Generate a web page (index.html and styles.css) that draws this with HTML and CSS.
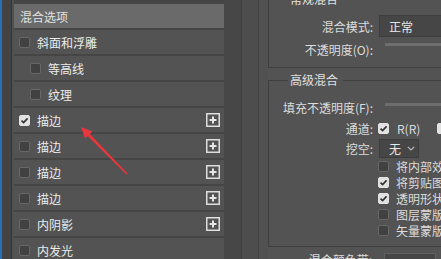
FILE: index.html
```html
<!DOCTYPE html>
<html lang="zh">
<head>
<meta charset="utf-8">
<link rel="stylesheet" href="styles.css">
</head>
<body>
<div class="app">
  <div class="edge"><div class="e-blue"></div><div class="e-gray"></div><div class="e-line"></div><div class="e-pad"></div></div>
  <div class="list">
    <div class="head">混合选项</div>
    <div class="row"><span class="cb"></span><span class="txt">斜面和浮雕</span></div>
    <div class="row sub"><span class="cb"></span><span class="txt">等高线</span></div>
    <div class="row sub"><span class="cb"></span><span class="txt">纹理</span></div>
    <div class="row"><span class="cb on"><svg viewBox="0 0 11 11" width="11" height="11"><path d="M2.5 5.6 L4.6 7.6 L8.6 3.4" fill="none" stroke="#333" stroke-width="1.7"/></svg></span><span class="txt">描边</span><svg class="plus" viewBox="0 0 14 14" width="14" height="14"><rect x="0.75" y="0.75" width="12.5" height="12.5" fill="none" stroke="#dedede" stroke-width="1.5"/><path d="M3.5 7 H10.5 M7 3.5 V10.5" stroke="#e6e6e6" stroke-width="2"/></svg></div>
    <div class="row"><span class="cb"></span><span class="txt">描边</span><svg class="plus" viewBox="0 0 14 14" width="14" height="14"><rect x="0.75" y="0.75" width="12.5" height="12.5" fill="none" stroke="#dedede" stroke-width="1.5"/><path d="M3.5 7 H10.5 M7 3.5 V10.5" stroke="#e6e6e6" stroke-width="2"/></svg></div>
    <div class="row"><span class="cb"></span><span class="txt">描边</span><svg class="plus" viewBox="0 0 14 14" width="14" height="14"><rect x="0.75" y="0.75" width="12.5" height="12.5" fill="none" stroke="#dedede" stroke-width="1.5"/><path d="M3.5 7 H10.5 M7 3.5 V10.5" stroke="#e6e6e6" stroke-width="2"/></svg></div>
    <div class="row"><span class="cb"></span><span class="txt">描边</span><svg class="plus" viewBox="0 0 14 14" width="14" height="14"><rect x="0.75" y="0.75" width="12.5" height="12.5" fill="none" stroke="#dedede" stroke-width="1.5"/><path d="M3.5 7 H10.5 M7 3.5 V10.5" stroke="#e6e6e6" stroke-width="2"/></svg></div>
    <div class="row"><span class="cb"></span><span class="txt">内阴影</span><svg class="plus" viewBox="0 0 14 14" width="14" height="14"><rect x="0.75" y="0.75" width="12.5" height="12.5" fill="none" stroke="#dedede" stroke-width="1.5"/><path d="M3.5 7 H10.5 M7 3.5 V10.5" stroke="#e6e6e6" stroke-width="2"/></svg></div>
    <div class="row"><span class="cb"></span><span class="txt">内发光</span></div>
  </div>
  <div class="gutter"><div class="gu-a"></div><div class="gu-line"></div><div class="gu-b"></div><div class="gu-line2"></div><div class="gu-c"></div></div>
  <div class="panel">
    <div class="group g1">
      <div class="gtitle"><span class="gt-text">常规混合</span></div>
      <div class="gbody b1">
        <div class="frow r-mode"><span class="flabel">混合模式:</span><div class="select wide">正常</div></div>
        <div class="frow r-op"><span class="flabel">不透明度(O):</span><div class="slider"></div></div>
      </div>
    </div>
    <div class="group g2">
      <div class="gtitle"><span class="gt-text">高级混合</span></div>
      <div class="gbody b2">
        <div class="frow r-fill"><span class="flabel">填充不透明度(F):</span><div class="slider s2"></div></div>
        <div class="frow r-ch"><span class="flabel">通道:</span><span class="cb on ch1"><svg viewBox="0 0 11 11" width="11" height="11"><path d="M2.5 5.6 L4.6 7.6 L8.6 3.4" fill="none" stroke="#333" stroke-width="1.7"/></svg></span><span class="rr">R(R)</span><span class="cb on ch2"></span></div>
        <div class="frow r-ko"><span class="flabel">挖空:</span><div class="select small">无<svg class="chev" viewBox="0 0 8 5" width="8" height="5"><path d="M0.8 0.8 L4 4 L7.2 0.8" fill="none" stroke="#bdbdbd" stroke-width="1.1"/></svg></div></div>
        <div class="ck"><span class="cb"></span><span>将内部效果混合成组</span></div>
        <div class="ck"><span class="cb on"><svg viewBox="0 0 11 11" width="11" height="11"><path d="M2.5 5.6 L4.6 7.6 L8.6 3.4" fill="none" stroke="#333" stroke-width="1.7"/></svg></span><span>将剪贴图层混合成组</span></div>
        <div class="ck"><span class="cb on"><svg viewBox="0 0 11 11" width="11" height="11"><path d="M2.5 5.6 L4.6 7.6 L8.6 3.4" fill="none" stroke="#333" stroke-width="1.7"/></svg></span><span>透明形状图层</span></div>
        <div class="ck"><span class="cb"></span><span>图层蒙版隐藏效果</span></div>
        <div class="ck"><span class="cb"></span><span>矢量蒙版隐藏效果</span></div>
      </div>
    </div>
    <div class="frow r-band"><span class="flabel top">混合颜色带:</span><div class="select band"></div></div>
  </div>
  <svg class="arrow" viewBox="0 0 441 259" width="441" height="259"><polygon points="81,127 92.4,131.4 89.8,134.1 127.6,173.5 126.4,174.5 87.7,136 85.2,138.6" fill="#e8363c"/></svg>
</div>
</body>
</html>
```
FILE: styles.css
```css
html, body {
  margin: 0;
  padding: 0;
  overflow: hidden;
}
body {
  width: 441px;
  height: 259px;
  background: #535353;
  font-family: "Noto Sans CJK SC", "Noto Sans", sans-serif;
  font-size: 12px;
  color: #e4e4e4;
}
.app {
  position: relative;
  display: flex;
  width: 441px;
  height: 259px;
  overflow: hidden;
}
.edge {
  display: flex;
  width: 14px;
  flex: none;
}
.e-blue { width: 2px; background: #2a6db8; }
.e-gray { width: 9px; background: #434343; }
.e-line { width: 1px; background: #363636; }
.e-pad { width: 2px; background: #505050; }

.list {
  width: 210px;
  flex: none;
  padding-top: 4px;
  background: #454545;
  display: flex;
  flex-direction: column;
}
.head {
  height: 24px;
  flex: none;
  border-bottom: 2px solid #454545;
  background: #6a6a6a;
  padding-left: 6px;
  display: flex;
  align-items: center;
  color: #e2e2e2;
}
.row {
  height: 24px;
  flex: none;
  border-bottom: 2px solid #454545;
  background: #535353;
  display: flex;
  align-items: center;
  padding-left: 5px;
  padding-right: 4px;
}
.row.sub { padding-left: 16px; }
.txt { color: #ececec; }
.cb {
  width: 11px;
  height: 11px;
  flex: none;
  box-sizing: border-box;
  border: 1px solid #686868;
  background: #414141;
  border-radius: 2px;
  margin-right: 7px;
  display: flex;
  align-items: center;
  justify-content: center;
}
.cb.on {
  background: #e2e2e2;
  border-color: #e2e2e2;
}
.cb svg { display: block; flex: none; margin: -1px; }
.plus { margin-left: auto; display: block; }

.gutter {
  display: flex;
  width: 44px;
  flex: none;
}
.gu-a { width: 17px; background: #474747; }
.gu-line { width: 1px; background: #3e3e3e; }
.gu-b { width: 16px; background: #4d4d4d; }
.gu-line2 { width: 1px; background: #414141; }
.gu-c { width: 9px; background: #515151; }

.panel {
  flex: 1;
  min-width: 0;
  display: flex;
  flex-direction: column;
  color: #dcdcdc;
}
.group { display: flex; flex-direction: column; }
.g1 { margin-top: -8px; }
.g2 { margin-top: 5px; }
.gtitle {
  display: flex;
  height: 14px;
  line-height: 14px;
  white-space: nowrap;
}
.gtitle::before {
  content: "";
  width: 19px;
  margin-top: 7px;
  border-top: 1px solid #3f3f3f;
  border-left: 1px solid #3f3f3f;
}
.gtitle::after {
  content: "";
  flex: 1;
  margin-top: 7px;
  margin-left: 5px;
  border-top: 1px solid #3f3f3f;
}
.gt-text { margin-left: 2px; color: #e0e0e0; }
.gbody {
  border-left: 1px solid #3f3f3f;
  border-bottom: 1px solid #3f3f3f;
  display: flex;
  flex-direction: column;
}
.b1 { padding: 9px 0 8px; }
.b2 { padding: 9px 0 8px; }

.frow {
  display: flex;
  align-items: center;
  white-space: nowrap;
}
.flabel {
  width: 104px;
  flex: none;
  text-align: right;
}
.r-mode { height: 22px; }
.r-op { height: 20px; margin-top: 2px; }
.r-fill { height: 22px; }
.r-ch { height: 20px; }
.r-ko { height: 20px; }

.select {
  box-sizing: border-box;
  flex: none;
  margin-left: 6px;
  background: #464646;
  border: 1px solid #3d3d3d;
  padding-left: 9px;
  display: flex;
  align-items: center;
  color: #e6e6e6;
}
.select.wide { width: 90px; height: 22px; }
.select.small { width: 40px; height: 19px; }
.chev { margin-left: 6px; display: block; }

.slider {
  align-self: flex-start;
  margin-top: 4px;
  margin-left: 12px;
  width: 90px;
  flex: none;
  height: 3px;
  background: #6e6e6e;
}
.slider.s2 { margin-top: 7px; }

.ch1 { margin-left: 5px; margin-right: 0; }
.rr { margin-left: 8px; }
.ch2 { margin-left: 17px; }

.ck {
  height: 16px;
  display: flex;
  align-items: center;
  padding-left: 109px;
  white-space: nowrap;
}

.r-band { margin-top: 6px; align-items: flex-start; }
.flabel.top { line-height: 14px; }
.select.band {
  margin-left: 12px;
  width: 52px;
  height: 22px;
  background: #464646;
  border: 1px solid #606060;
}

.arrow {
  position: absolute;
  left: 0;
  top: 0;
  pointer-events: none;
}
```
